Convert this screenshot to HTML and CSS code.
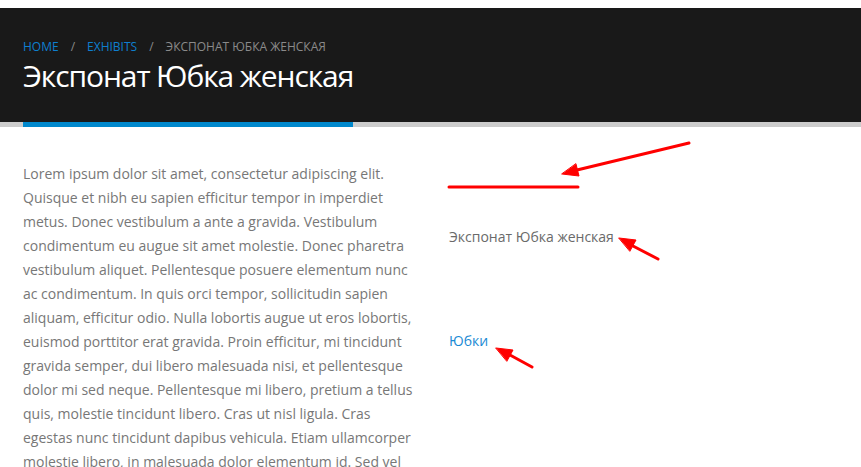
FILE: index.html
```html
<!DOCTYPE html>
<html lang="ru">
<head>
  <meta charset="UTF-8">
  <meta name="viewport" content="width=device-width, initial-scale=1.0">
  <title>Экспонат Юбка женская</title>
  <link rel="stylesheet" href="styles.css">
</head>
<body>
  <header class="page-header">
    <ul class="breadcrumb">
      <li><a href="#">Home</a></li>
      <li class="sep">/</li>
      <li><a href="#">Exhibits</a></li>
      <li class="sep">/</li>
      <li class="current">Экспонат Юбка женская</li>
    </ul>
    <h1 class="page-title">Экспонат Юбка женская</h1>
  </header>

  <main class="content">
    <div class="main-col">
      <p>Lorem ipsum dolor sit amet, consectetur adipiscing elit. Quisque et nibh eu sapien efficitur tempor in imperdiet metus. Donec vestibulum a ante a gravida. Vestibulum condimentum eu augue sit amet molestie. Donec pharetra vestibulum aliquet. Pellentesque posuere elementum nunc ac condimentum. In quis orci tempor, sollicitudin sapien aliquam, efficitur odio. Nulla lobortis augue ut eros lobortis, euismod porttitor erat gravida. Proin efficitur, mi tincidunt gravida semper, dui libero malesuada nisi, et pellentesque dolor mi sed neque. Pellentesque mi libero, pretium a tellus quis, molestie tincidunt libero. Cras ut nisl ligula. Cras egestas nunc tincidunt dapibus vehicula. Etiam ullamcorper molestie libero, in malesuada dolor elementum id. Sed vel lorem at nisi tristique feugiat.</p>
    </div>
    <aside class="side-col">
      <p class="exhibit-name">Экспонат Юбка женская</p>
      <a class="category-link" href="#">Юбки</a>
    </aside>
  </main>

  <!-- annotation marks from the screenshot -->
  <svg class="marks" width="861" height="467" viewBox="0 0 861 467">
    <g stroke="#ff0000" stroke-width="3" stroke-linecap="round" fill="#ff0000">
      <line x1="449" y1="187" x2="578" y2="187"/>
      <line x1="689" y1="143" x2="577" y2="170"/>
      <polygon points="562,174 579,176 576,164" stroke-width="1"/>
      <line x1="658" y1="259" x2="633" y2="246"/>
      <polygon points="619,238 636,240 630,251" stroke-width="1"/>
      <line x1="532" y1="367" x2="510" y2="355"/>
      <polygon points="496,348 513,350 507,361" stroke-width="1"/>
    </g>
  </svg>
</body>
</html>
```

FILE: styles.css
```css
body {
  margin: 0;
  padding-top: 8px;
  font-family: 'Open Sans', 'Noto Sans', sans-serif;
  font-size: 14px;
  line-height: 24px;
  color: #777;
  background: #fff;
  position: relative;
  overflow: hidden;
}

a {
  text-decoration: none;
}

.page-header {
  background: #191919;
  border-bottom: 5px solid #cccccc;
  padding: 29px 23px 0;
}

.breadcrumb {
  list-style: none;
  margin: 0;
  padding: 0;
  display: flex;
  gap: 12px;
  font-size: 12px;
  line-height: 19px;
  text-transform: uppercase;
}

.breadcrumb a {
  color: #0e7fcf;
}

.breadcrumb .sep,
.breadcrumb .current {
  color: #8a8a8a;
}

.page-title {
  display: inline-block;
  margin: 0 0 -5px;
  padding-bottom: 26px;
  border-bottom: 5px solid #0088cc;
  font-size: 30px;
  font-weight: 400;
  line-height: 40px;
  letter-spacing: -1.1px;
  color: #fff;
}

.content {
  display: grid;
  grid-template-columns: 396px 1fr;
  gap: 30px;
  padding: 35px 23px 0;
}

.main-col p {
  margin: 0;
}

.exhibit-name {
  margin: 63px 0 0;
  color: #6a6a6a;
}

.category-link {
  display: inline-block;
  margin-top: 80px;
  color: #1a8ad4;
}

.marks {
  position: absolute;
  top: 0;
  left: 0;
  pointer-events: none;
}
```
